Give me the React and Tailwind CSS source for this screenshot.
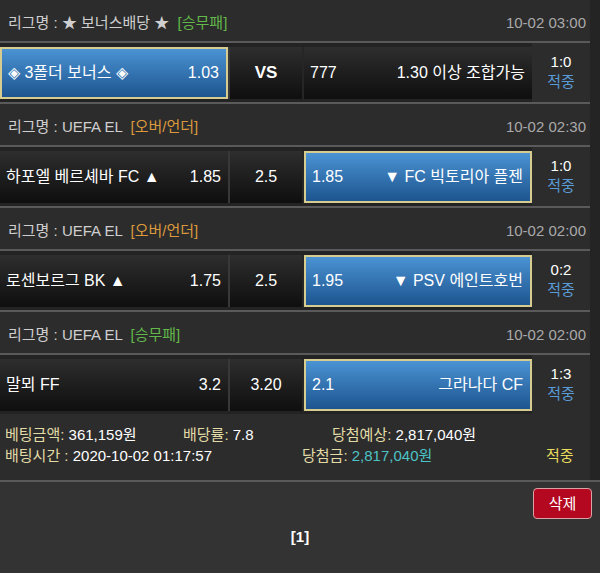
import React from "react";

const font = { fontFamily: '"Liberation Sans", "Noto Sans CJK KR", sans-serif' };

function Header({ tag, tagColor, date }) {
  return (
    <div className="h-[41px] bg-[#2c2c2c] flex items-center justify-between pl-[8px] pr-[4px] pt-[4px] text-[15px] leading-none">
      <div className="text-[#cfcfcf] whitespace-pre">
        {`리그명 : ${tag[0]}  `}
        <span className={tagColor}>{tag[1]}</span>
      </div>
      <div className="text-[#a9a9a9]">{date}</div>
    </div>
  );
}

const Line = () => <div className="h-[2px] bg-[#5a5a5a]" />;

const dark = "bg-gradient-to-b from-[#2e2e2e] to-[#0f0f0f]";
const blue = "bg-gradient-to-b from-[#4b93d3] to-[#1d5590] border-2 border-[#d6cc8f]";

function Cell({ sel, className = "", children }) {
  return (
    <div className={`h-[52px] flex items-center text-[16px] text-white leading-none ${sel ? blue : dark} ${className}`}>
      {children}
    </div>
  );
}

function Row({ home, homeOdd, mid, midBold, away, awayOdd, sel, score }) {
  return (
    <div className="h-[59px] bg-[#232323] flex items-center">
      <Cell sel={sel === "home"} className="w-[228px] justify-between pl-[6px] pr-[7px]">
        <span>{home}</span>
        <span>{homeOdd}</span>
      </Cell>
      <div className="w-[2px] h-[52px] bg-[#383838]" />
      <Cell className={`w-[72px] justify-center ${midBold ? "font-bold text-[17px]" : ""}`}>{mid}</Cell>
      <div className="w-[2px] h-[52px] bg-[#262626]" />
      <Cell sel={sel === "away"} className="w-[228px] justify-between pl-[6px] pr-[7px]">
        <span>{awayOdd}</span>
        <span>{away}</span>
      </Cell>
      <div className="flex-1 h-[59px] bg-[#2c2c2c] flex flex-col items-center justify-center gap-[5px] pb-[3px] text-[15px] leading-none">
        <span className="text-white">{score}</span>
        <span className="text-[#5a9ad6]">적중</span>
      </div>
    </div>
  );
}

export default function App() {
  const green = "text-[#62b84a]";
  const orange = "text-[#dc9a3c]";
  return (
    <div style={font} className="w-[600px] h-[573px] bg-[#333333] overflow-hidden">
      <div className="flex">
        <div className="w-[590px]">
          <Header tag={["★ 보너스배당 ★", "[승무패]"]} tagColor={green} date="10-02 03:00" />
          <Line />
          <Row sel="home" home="◈ 3폴더 보너스 ◈" homeOdd="1.03" mid="VS" midBold awayOdd="777" away="1.30 이상 조합가능" score="1:0" />
          <Line />
          <Header tag={["UEFA EL", "[오버/언더]"]} tagColor={orange} date="10-02 02:30" />
          <Line />
          <Row sel="away" home="하포엘 베르셰바 FC ▲" homeOdd="1.85" mid="2.5" awayOdd="1.85" away="▼ FC 빅토리아 플젠" score="1:0" />
          <Line />
          <Header tag={["UEFA EL", "[오버/언더]"]} tagColor={orange} date="10-02 02:00" />
          <Line />
          <Row sel="away" home="로센보르그 BK ▲" homeOdd="1.75" mid="2.5" awayOdd="1.95" away="▼ PSV 에인트호번" score="0:2" />
          <Line />
          <Header tag={["UEFA EL", "[승무패]"]} tagColor={green} date="10-02 02:00" />
          <Line />
          <Row sel="away" home="말뫼 FF" homeOdd="3.2" mid="3.20" awayOdd="2.1" away="그라나다 CF" score="1:3" />
          <div className="h-[66px] bg-[#2c2c2c] pl-[5px] pt-[10px] text-[15px] leading-[21px]">
            <div className="flex">
              <div className="w-[178px]"><span className="text-[#e2dba6]">베팅금액:</span> <span className="text-white">361,159원</span></div>
              <div className="w-[149px]"><span className="text-[#e2dba6]">배당률:</span> <span className="text-white">7.8</span></div>
              <div><span className="text-[#e2dba6]">당첨예상:</span> <span className="text-white">2,817,040원</span></div>
            </div>
            <div className="flex">
              <div className="w-[297px]"><span className="text-[#e2dba6]">배팅시간 :</span> <span className="text-white">2020-10-02 01:17:57</span></div>
              <div className="w-[244px]"><span className="text-[#e2dba6]">당첨금:</span> <span className="text-[#4cc3c6]">2,817,040원</span></div>
              <div className="text-[#e8dc5c]">적중</div>
            </div>
          </div>
        </div>
        <div className="flex-1 bg-[#242424]" />
      </div>
      <Line />
      <div className="flex justify-end pr-[8px] pt-[6px]">
        <button className="h-[31px] w-[59px] rounded-[4px] bg-[#b3081f] border-[1.5px] border-[#d9a3a6] text-white text-[15px] leading-none">삭제</button>
      </div>
      <div className="text-center text-white font-bold text-[15px] leading-none pt-[10px]">[1]</div>
    </div>
  );
}
